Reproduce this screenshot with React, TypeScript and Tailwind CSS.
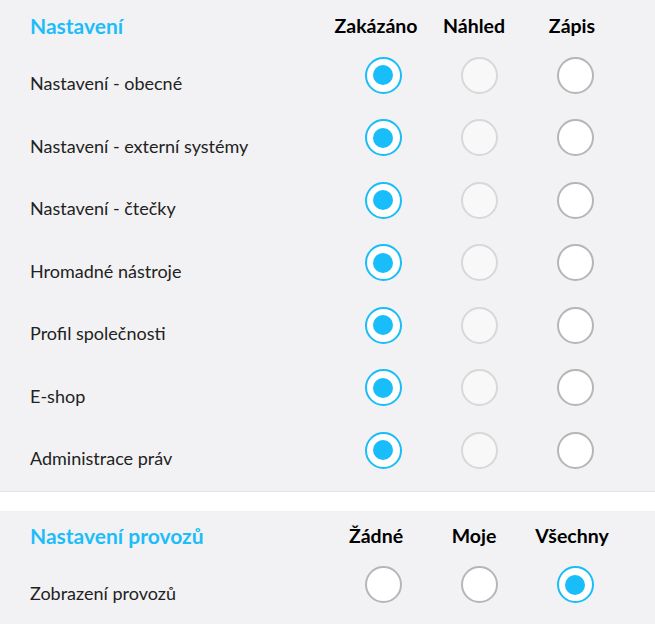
import React from "react";

const rows = [
  "Nastavení - obecné",
  "Nastavení - externí systémy",
  "Nastavení - čtečky",
  "Hromadné nástroje",
  "Profil společnosti",
  "E-shop",
  "Administrace práv",
];

function Radio({ kind }: { kind: "checked" | "disabled" | "empty" }) {
  if (kind === "checked")
    return (
      <div className="w-[37px] h-[37px] rounded-full border-2 border-[#19bdf9] bg-white flex items-center justify-center">
        <div className="w-[20px] h-[20px] rounded-full bg-[#19bdf9]" />
      </div>
    );
  if (kind === "disabled")
    return <div className="w-[37px] h-[37px] rounded-full border-2 border-[#d8d8da] bg-[#f8f8f8]" />;
  return <div className="w-[37px] h-[37px] rounded-full border-2 border-[#b6b6b9] bg-white" />;
}

const offs = ["pl-[14px]", "pl-[10px]", "pl-[6px]"];

export default function App() {
  return (
    <div className="w-[655px] h-[624px] bg-white text-[#222] overflow-hidden" style={{ fontFamily: "Lato, 'Noto Sans', sans-serif" }}>
      <div className="bg-[#f2f2f4] border-b border-[#e4e4e6] pb-[9px]">
        <div className="grid grid-cols-[297px_98px_98px_98px] pl-[30px] h-[44px] pt-[7px] items-center">
          <div className="text-[21px] font-bold text-[#1ebdf9] leading-none">Nastavení</div>
          {["Zakázáno", "Náhled", "Zápis"].map((h) => (
            <div key={h} className="text-center text-[19.5px] font-bold text-black leading-none">{h}</div>
          ))}
        </div>
        {rows.map((r) => (
          <div key={r} className="grid grid-cols-[297px_98px_98px_98px] pl-[30px] h-[62.5px] items-center">
            <div className="text-[18px] leading-none pt-[16px]">{r}</div>
            {(["checked", "disabled", "empty"] as const).map((k, i) => (
              <div key={k} className={"flex justify-center " + offs[i]}>
                <Radio kind={k} />
              </div>
            ))}
          </div>
        ))}
      </div>
      <div className="h-[19px] bg-white" />
      <div className="bg-[#f2f2f4] border-b border-[#e4e4e6] h-[114px]">
        <div className="grid grid-cols-[297px_98px_98px_98px] pl-[30px] h-[43px] pt-[7px] items-center">
          <div className="text-[21px] font-bold text-[#1ebdf9] leading-none">Nastavení provozů</div>
          {["Žádné", "Moje", "Všechny"].map((h) => (
            <div key={h} className="text-center text-[19.5px] font-bold text-black leading-none">{h}</div>
          ))}
        </div>
        <div className="grid grid-cols-[297px_98px_98px_98px] pl-[30px] h-[62px] items-center">
          <div className="text-[18px] leading-none pt-[16px]">Zobrazení provozů</div>
          {(["empty", "empty", "checked"] as const).map((k, i) => (
            <div key={i} className={"flex justify-center " + offs[i]}>
              <Radio kind={k} />
            </div>
          ))}
        </div>
      </div>
    </div>
  );
}
